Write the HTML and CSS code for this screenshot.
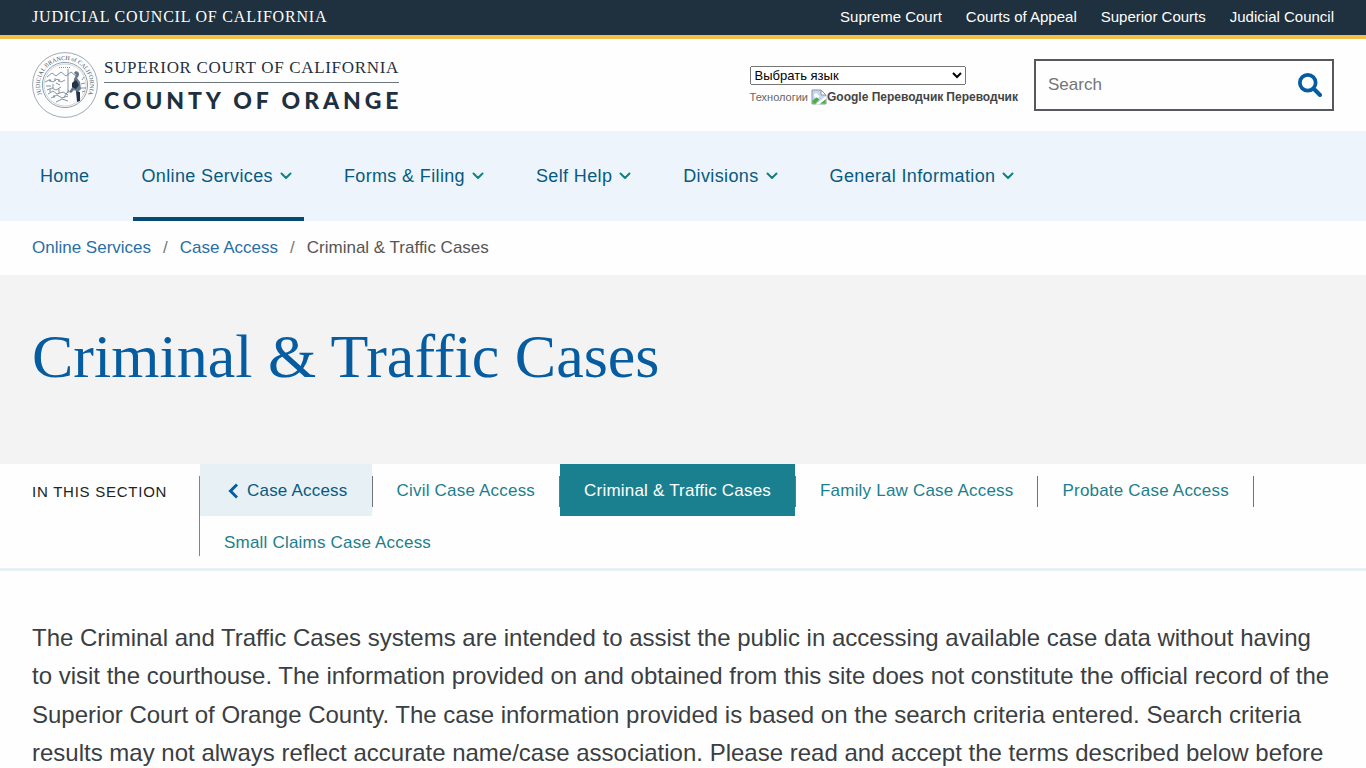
FILE: index.html
```html
<!DOCTYPE html>
<html lang="en">
<head>
    <meta charset="UTF-8">
    <meta name="viewport" content="width=device-width, initial-scale=1.0">
    <title>Criminal &amp; Traffic Cases</title>
    <link rel="stylesheet" href="styles.css">
</head>
<body>
    <svg class="sprite" aria-hidden="true">
        <symbol id="chevron" viewBox="0 0 12 8">
            <path d="M1.5 1.5 L6 6 L10.5 1.5" fill="none" stroke="currentColor" stroke-width="2" stroke-linecap="round" stroke-linejoin="round"/>
        </symbol>
    </svg>

    <div class="topbar">
        <a class="topbar-brand" href="#">JUDICIAL COUNCIL OF CALIFORNIA</a>
        <nav class="topbar-links" aria-label="Branch">
            <a href="#">Supreme Court</a>
            <a href="#">Courts of Appeal</a>
            <a href="#">Superior Courts</a>
            <a href="#">Judicial Council</a>
        </nav>
    </div>

    <header class="header">
        <a class="logo" href="#">
            <svg class="seal" viewBox="0 0 66 66" aria-hidden="true">
                <defs>
                    <path id="ring" d="M16 51.300 A25 25 0 1 1 50 51.300"/>
                </defs>
                <g fill="none" stroke="#8594a2">
                    <circle cx="33" cy="33" r="32.4" stroke-width="0.8"/>
                    <circle cx="33" cy="33" r="22.6" stroke-width="0.9"/>
                    <circle cx="33" cy="33" r="21" stroke-width="0.4"/>
                </g>
                <text class="seal-text"><textPath href="#ring" startOffset="50%" text-anchor="middle">JUDICIAL BRANCH of CALIFORNIA</textPath></text>
                <g fill="none" stroke="#66798a" stroke-width="0.8">
                    <path d="M27 15.5h12" stroke-dasharray="1 1"/>
                    <path d="M15 25l5-4 4 3 5-4 5 4 5-4 5 4"/>
                    <path d="M13 30l4-2 4 2 4-3 4 3 4-2"/>
                    <path d="M14 34h5m2-2v4m3-5l4 2m-13 5l5-2 4 2 5-3"/>
                    <path d="M16 42l5-3 4 3 6-2 5 3M19 46l6-3 5 3 6-2M24 50l6-3 6 2"/>
                    <path d="M36 17v24M32 45l5-7"/>
                    <path d="M49 32l4-1m-4 5h5m-4 4l3-1M50 28l2-3"/>
                    <path d="M18 27v3m5-4v3m4-2v3m-9 7v3m9-3v4m-5 2v3"/>
                </g>
                <path d="M42 21c1-3 5-2 5 1 0 2-1 3-2 4l3 4 1 7-3 3-4-2-3 3-2-1 4-6 1-7 2-4z" fill="#66798a"/>
                <path d="M40 31l4-3 3 5-3 4-4-2z" fill="#203445"/>
                <path d="M44 39l4 1v9l-3 1z" fill="#203445"/>
            </svg>
            <span class="logo-name">
                <span class="logo-state">SUPERIOR COURT OF CALIFORNIA</span>
                <span class="logo-county">COUNTY OF ORANGE</span>
            </span>
        </a>

        <div class="tools">
            <div class="translate">
                <select aria-label="Выбрать язык">
                    <option>Выбрать язык</option>
                </select>
                <div class="translate-credit">
                    <span>Технологии</span>
                    <a href="#">
                        <svg class="broken" viewBox="0 0 16 16" aria-hidden="true">
                            <path d="M1 1h9l5 5v9H1z" fill="#c4d8f5" stroke="#8e979f"/>
                            <path d="M10 1v5h5z" fill="#fff" stroke="#8e979f"/>
                            <path d="M3 6.500a2 2 0 0 1 4-.5 1.500 1.500 0 0 1 1 2.500H4z" fill="#fff"/>
                            <path d="M1.500 14.500v-3l4-3 3 2-4 4z" fill="#4caf3c"/>
                            <path d="M9 14.500l5.500-5v5z" fill="#4caf3c"/>
                            <path d="M4.500 15.500L15.500 6.500v3L8 15.500z" fill="#fff"/>
                        </svg><span class="translate-alt">Google Переводчик</span>
                        <span>Переводчик</span>
                    </a>
                </div>
            </div>
            <form class="search" action="#">
                <input type="search" placeholder="Search" aria-label="Search">
                <button type="submit" aria-label="Search">
                    <svg viewBox="0 0 24 24" aria-hidden="true">
                        <circle cx="9.750" cy="9.750" r="7.900" fill="none" stroke="currentColor" stroke-width="3.700"/>
                        <path d="M15.500 15.500L22 22" stroke="currentColor" stroke-width="4" stroke-linecap="round"/>
                    </svg>
                </button>
            </form>
        </div>
    </header>

    <nav class="main-nav" aria-label="Main">
        <a href="#">Home</a>
        <a class="active" href="#">Online Services <svg class="chevron"><use href="#chevron"/></svg></a>
        <a href="#">Forms &amp; Filing <svg class="chevron"><use href="#chevron"/></svg></a>
        <a href="#">Self Help <svg class="chevron"><use href="#chevron"/></svg></a>
        <a href="#">Divisions <svg class="chevron"><use href="#chevron"/></svg></a>
        <a href="#">General Information <svg class="chevron"><use href="#chevron"/></svg></a>
    </nav>

    <nav class="breadcrumb" aria-label="Breadcrumb">
        <a href="#">Online Services</a>
        <span class="slash">/</span>
        <a href="#">Case Access</a>
        <span class="slash">/</span>
        <span>Criminal &amp; Traffic Cases</span>
    </nav>

    <div class="hero">
        <h1>Criminal &amp; Traffic Cases</h1>
    </div>

    <nav class="section-nav" aria-label="In this section">
        <div class="section-label">IN THIS SECTION</div>
        <ul>
            <li class="parent"><a href="#"><svg class="back" viewBox="0 0 10 16" aria-hidden="true"><path d="M8 2.500L2.500 8 8 13.500" fill="none" stroke="currentColor" stroke-width="3" stroke-linecap="square"/></svg>Case Access</a></li>
            <li><a href="#">Civil Case Access</a></li>
            <li class="current"><a href="#">Criminal &amp; Traffic Cases</a></li>
            <li><a href="#">Family Law Case Access</a></li>
            <li><a href="#">Probate Case Access</a></li>
            <li><a href="#">Small Claims Case Access</a></li>
        </ul>
    </nav>

    <main class="content">
        <p>The Criminal and Traffic Cases systems are intended to assist the public in accessing available case data without having to visit the courthouse. The information provided on and obtained from this site does not constitute the official record of the Superior Court of Orange County. The case information provided is based on the search criteria entered. Search criteria results may not always reflect accurate name/case association. Please read and accept the terms described below before</p>
    </main>
</body>
</html>
```

FILE: styles.css
```css
*{
    box-sizing: border-box;
}
body{
    margin: 0;
    font-family: "Liberation Sans", Arial, sans-serif;
    font-size: 17px;
    color: #3b3e42;
    background-color: #fefefe;
}
a{
    text-decoration: none;
}
.sprite{
    display: none;
}

/* top bar */
.topbar{
    display: flex;
    justify-content: space-between;
    align-items: center;
    padding: 0 32px 2px;
    line-height: 33px;
    background-color: #1f303e;
    border-bottom: 4px solid #f0c04a;
}
.topbar a{
    color: #fff;
}
.topbar-brand{
    font-family: "Liberation Serif", serif;
    font-size: 16px;
    letter-spacing: 0.05em;
}
.topbar-links{
    display: flex;
    gap: 24px;
    font-size: 15px;
}

/* header */
.header{
    display: flex;
    justify-content: space-between;
    align-items: center;
    padding: 13px 32px;
}
.logo{
    display: flex;
    align-items: center;
    gap: 6px;
    color: #1f303e;
}
.seal{
    width: 66px;
    height: 66px;
}
.seal-text{
    font-family: "Liberation Serif", serif;
    font-size: 6px;
    fill: #3f5568;
}
.logo-name{
    display: flex;
    flex-direction: column;
}
.logo-state{
    font-family: "Liberation Serif", serif;
    font-size: 17px;
    line-height: 28px;
    letter-spacing: 0.04em;
    border-bottom: 1px solid #6d7780;
}
.logo-county{
    margin-right: -0.17em;
    font-family: Lato, sans-serif;
    font-weight: 900;
    font-size: 23px;
    line-height: 34px;
    letter-spacing: 0.17em;
}
.tools{
    display: flex;
    align-items: center;
    gap: 16px;
}
.translate{
    display: flex;
    flex-direction: column;
    gap: 4px;
}
.translate select{
    width: 216px;
    height: 19px;
    font-family: "Liberation Sans", Arial, sans-serif;
    font-size: 13px;
}
.translate-credit{
    display: flex;
    align-items: center;
    gap: 3px;
    font-size: 11px;
    color: #666;
}
.translate-credit a{
    display: flex;
    align-items: center;
    gap: 3px;
    font-size: 12px;
    font-weight: bold;
    color: #444;
}
.broken{
    width: 16px;
    height: 16px;
    margin-right: -3px;
}
.search{
    display: flex;
    width: 300px;
    height: 52px;
    border: 2px solid #55585c;
}
.search input{
    flex: 1;
    min-width: 0;
    padding: 0 12px;
    border: 0;
    background: none;
    font: inherit;
}
.search input::placeholder{
    color: #757575;
}
.search button{
    display: flex;
    align-items: center;
    padding: 0 10px;
    border: 0;
    background: none;
    color: #065ca0;
    cursor: pointer;
}
.search svg{
    width: 24px;
    height: 24px;
}

/* main navigation */
.main-nav{
    display: flex;
    gap: 32px;
    padding: 0 32px;
    background-color: #edf4fb;
}
.main-nav a{
    display: flex;
    align-items: center;
    gap: 7px;
    height: 90px;
    padding: 0 12px 0 8px;
    border-top: 4px solid transparent;
    border-bottom: 4px solid transparent;
    font-size: 18px;
    letter-spacing: 0.02em;
    color: #075a80;
}
.main-nav a.active{
    border-bottom-color: #064a70;
}
.chevron{
    width: 12px;
    height: 8px;
    color: #12807f;
}

.breadcrumb{
    display: flex;
    gap: 12px;
    padding: 0 32px;
    line-height: 54px;
    color: #555;
}
.breadcrumb a{
    color: #2a6ea6;
}
.slash{
    color: #777;
}

.hero{
    padding: 46px 32px 73px;
    background-color: #f3f3f3;
}
.hero h1{
    margin: 0;
    font-family: "Liberation Serif", serif;
    font-weight: normal;
    font-size: 62px;
    line-height: 70px;
    color: #065ca0;
}

/* section navigation */
.section-nav{
    display: flex;
    border-bottom: 3px solid #e9f0f3;
}
.section-label{
    flex: none;
    width: 199px;
    padding-left: 32px;
    font-size: 15px;
    line-height: 56px;
    letter-spacing: 0.05em;
    color: #222;
}
.section-nav ul{
    position: relative;
    display: flex;
    flex: 1;
    flex-wrap: wrap;
    margin: 0;
    padding: 0 32px 0 1px;
    list-style: none;
}
.section-nav ul::before{
    content: "";
    position: absolute;
    left: 0;
    top: 12px;
    bottom: 12px;
    border-left: 1px solid #7d858b;
}
.section-nav li{
    position: relative;
    padding-right: 1px;
}
.section-nav li::after{
    content: "";
    position: absolute;
    right: 0;
    top: 12px;
    height: 31px;
    border-right: 1px solid #6d757b;
}
.section-nav li:last-child::after{
    display: none;
}
.section-nav li a{
    display: flex;
    align-items: center;
    padding: 1px 24px 0;
    line-height: 51px;
    letter-spacing: 0.012em;
    color: #1b7f8d;
}
.section-nav .parent a{
    background-color: #e6f0f5;
    color: #075a80;
}
.section-nav .current a{
    background-color: #1a808f;
    color: #fff;
}
.back{
    width: 10px;
    height: 16px;
    margin: 0 9px 0 4px;
    color: #065ca0;
}

.content{
    padding: 48px 32px;
}
.content p{
    margin: 0;
    font-size: 24px;
    line-height: 1.6;
}
```
